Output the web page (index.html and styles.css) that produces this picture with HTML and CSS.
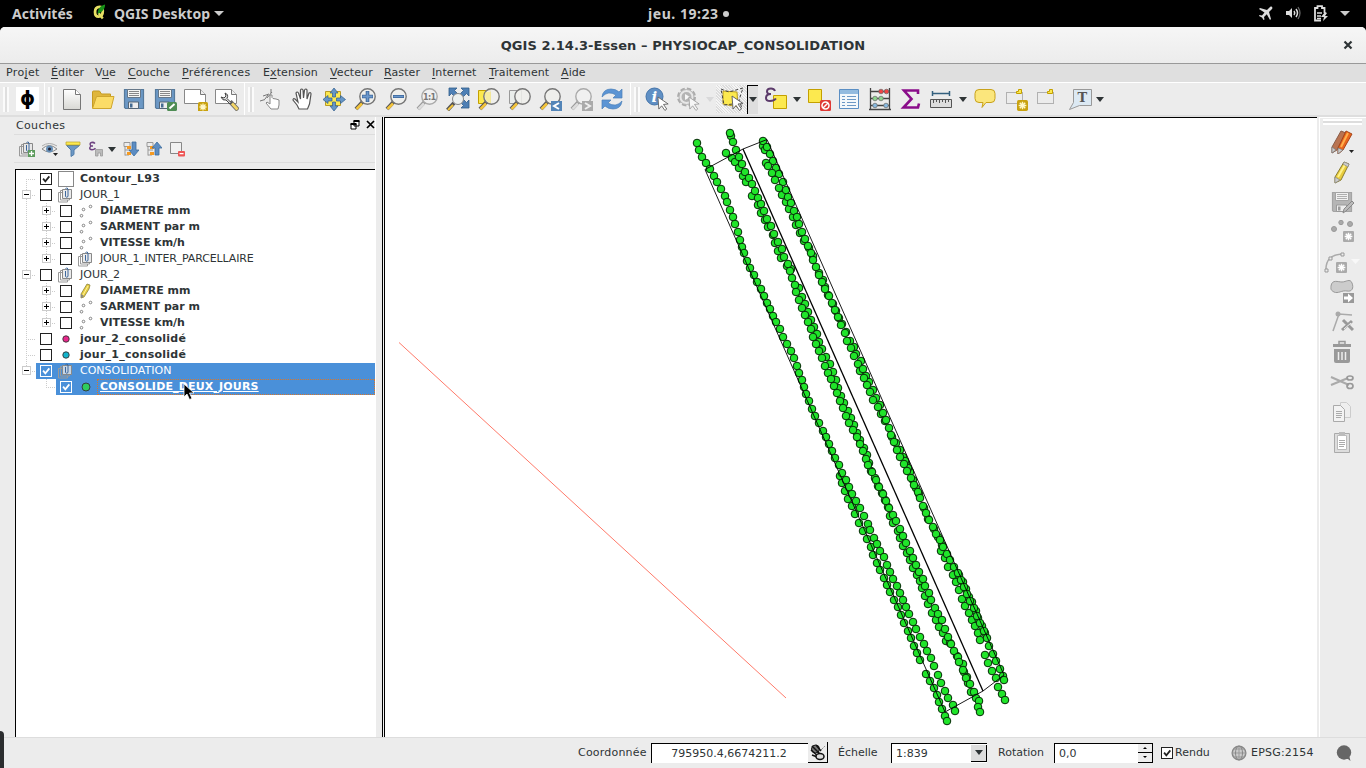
FILE: index.html
```html
<!DOCTYPE html>
<html lang="fr">
<head>
<meta charset="utf-8">
<title>QGIS 2.14.3-Essen - PHYSIOCAP_CONSOLIDATION</title>
<link rel="stylesheet" href="styles.css">
</head>
<body>
<svg class="defs" width="0" height="0">
  <defs>
    <linearGradient id="gy" x1="0" y1="0" x2="0" y2="1"><stop offset="0" stop-color="#fff"/><stop offset="1" stop-color="#d8d8d4"/></linearGradient>
    <symbol id="lens" viewBox="0 0 24 24"><path d="M10 14.500L3 22" stroke="#555" stroke-width="4"/><path d="M9 16.500L3.500 22" stroke="#f5c63c" stroke-width="2.500"/><circle cx="14.500" cy="9.500" r="7.700" fill="#f0f0ec" fill-opacity=".85" stroke="#777" stroke-width="1.400"/></symbol>
    <symbol id="lensg" viewBox="0 0 24 24"><path d="M10 14.500L3 22" stroke="#999" stroke-width="4"/><path d="M9 16.500L3.500 22" stroke="#ddd" stroke-width="2.500"/><circle cx="14.500" cy="9.500" r="7.700" fill="#f0f0f0" stroke="#aaa" stroke-width="1.400"/></symbol>
    <symbol id="ptr" viewBox="0 0 14 16"><path d="M1 1l11 7.500-5 .5 3.500 5-2 1.500-3.500-5-3 3.500z" fill="#fff" stroke="#666" stroke-width="1"/></symbol>
    <symbol id="floppy" viewBox="0 0 24 24"><path d="M2.500 2.500h19v19h-18l-1-1z" fill="#6c98c5" stroke="#567a9c" stroke-width="1.200"/><path d="M5.500 2.500h13v8h-13z" fill="#f5f5f2" stroke="#678"/><path d="M7 4.500h10M7 6.500h10M7 8.500h10" stroke="#888"/><path d="M6.500 15h10v6.500h-10z" fill="#eee" stroke="#567"/><path d="M8 16.500h2.500v4H8z" fill="#456b92"/></symbol>
    <symbol id="group" viewBox="0 0 16 16"><path d="M4 5.500H.5v9.500h9v-2" fill="none" stroke="#999"/><path d="M5 3.500H2.500v9.500h9v-1.500" fill="none" stroke="#999"/><path d="M4.500 2.500h9v9h-9z" fill="#e6e6e6" fill-opacity=".8" stroke="#888"/><path d="M7.500 4V9.500q1.200 1.500 2.500 0V2Q8.700-.5 7.500 2" fill="none" stroke="#3c679d"/></symbol>
    <symbol id="points" viewBox="0 0 16 16"><g fill="#fff" stroke="#777" stroke-width=".9"><circle cx="3.500" cy="12.700" r="1.300"/><circle cx="5.500" cy="6.500" r="1.300"/><circle cx="12.500" cy="3.500" r="1.300"/></g></symbol>
    <symbol id="star" viewBox="0 0 10 10"><rect width="10" height="10" rx="1.500" fill="#c9a20f"/><path d="M5 1.500v7M1.500 5h7M2.500 2.500l5 5M7.500 2.500l-5 5" stroke="#fff8c8" stroke-width="1.300"/></symbol>
    <symbol id="starg" viewBox="0 0 10 10"><rect width="10" height="10" rx="1" fill="#aaa"/><path d="M5 1.500v7M1.500 5h7M2.500 2.500l5 5M7.500 2.500l-5 5" stroke="#fff" stroke-width="1.300"/></symbol>
    <symbol id="check" viewBox="0 0 12 12"><path d="M2.500 5.500l2.700 3.300L10 2.800" fill="none" stroke="currentColor" stroke-width="2.100"/></symbol>
  </defs>
</svg>

<div class="desktop">
<header class="topbar">
  <span class="activities">Activités</span>
  <svg class="qlogo" viewBox="0 0 14 16"><path d="M7 2.500C3.500 2.500 2.200 5 2.200 8S3.500 13 6 13 10.500 11 10.500 7 9 2.500 7 2.500z" fill="none" stroke="#e8e064" stroke-width="3"/><path d="M6 9l4.500 6" stroke="#e8e064" stroke-width="2.500"/><path d="M5 10c0-5 3-9 8-10 0 4-2 8-8 10z" fill="#189018"/></svg>
  <span class="appname">QGIS Desktop</span><i class="arrow light"></i>
  <span class="clock">jeu. 19:23 <b class="dot"></b></span>
  <div class="tray">
    <svg width="15" height="15" viewBox="0 0 15 15"><path d="M14 1c-1-1-2 0-3 1L9 4 2 2 1 3l5.500 3.500L4 9.500 1.500 9 1 10l3 1.500L5.500 14l1-.500L6 11l2.800-2.700L12 14l1-1-2-7 2-2c1-1 2-2 1-3z" fill="#ddd"/></svg>
    <svg width="16" height="14" viewBox="0 0 16 14"><path d="M1 5h3l3-3v10L4 9H1z" fill="#ddd"/><path d="M9 5q1.500 2 0 4M11 3q3 4 0 8" fill="none" stroke="#ddd" stroke-width="1.500"/><path d="M13 1q4 6 0 12" fill="none" stroke="#666" stroke-width="1.300"/></svg>
    <svg width="16" height="17" viewBox="0 0 16 17"><path d="M11.500 8V3H9V1.200H4.500V3H2v12.500h6" fill="none" stroke="#ddd" stroke-width="1.800"/><path d="M4 8h5M4 11h4M4 13.500h4" stroke="#ddd" stroke-width="1.300"/><path d="M12 7l-4 5h3l-1 4 5-5h-3l2-3z" fill="#ddd"/></svg>
    <i class="arrow light"></i>
  </div>
</header>

<div class="window">
<div class="titlebar"><span class="wtitle">QGIS 2.14.3-Essen – PHYSIOCAP_CONSOLIDATION</span><svg class="close" width="10" height="10" viewBox="0 0 10 10"><path d="M1.500 1.500l7 7M8.500 1.500l-7 7" stroke="#2e3436" stroke-width="2.200"/></svg></div>
<nav class="menubar">
  <span class="m1">Pro<u>j</u>et</span><span class="m2"><u>É</u>diter</span><span class="m3">V<u>u</u>e</span><span class="m4"><u>C</u>ouche</span><span class="m5"><u>P</u>références</span><span class="m6">E<u>x</u>tension</span><span class="m7"><u>V</u>ecteur</span><span class="m8"><u>R</u>aster</span><span class="m9"><u>I</u>nternet</span><span class="m10"><u>T</u>raitement</span><span class="m11"><u>A</u>ide</span>
</nav>

<div class="toolbar">
  <div class="grp g0"><i class="handle"></i><span class="phi">ϕ</span></div>
  <div class="grp g1"><i class="handle"></i>
    <span class="tool"><svg viewBox="0 0 24 24"><path d="M3.500 2.500h12l5 5v15h-17z" fill="url(#gy)" stroke="#777"/><path d="M15.500 2.500v5h5" fill="#fff" stroke="#777"/></svg></span>
    <span class="tool"><svg viewBox="0 0 24 24"><path d="M1.500 21V5q0-1 1-1h6l2 3h9v4" fill="#dfb63c" stroke="#c59b22"/><path d="M1.500 21.500l4-12h17.500l-3 12z" fill="#fbdc67" stroke="#cfa62e"/></svg></span>
    <span class="tool"><svg viewBox="0 0 24 24"><use href="#floppy"/></svg></span>
    <span class="tool"><svg viewBox="0 0 24 24"><use href="#floppy"/><rect x="14" y="15" width="10" height="9" rx="1.500" fill="#4f8d55"/><path d="M16.500 21.500l5-4.500" stroke="#fff" stroke-width="2"/></svg></span>
    <span class="tool"><svg viewBox="0 0 24 24"><path d="M.5 2.500h16l5 5v9H.5z" fill="#fff" stroke="#888"/><path d="M16.500 2.500v5h5" fill="#eee" stroke="#777"/><use href="#star" x="14" y="15" width="10" height="10"/></svg></span>
    <span class="tool"><svg viewBox="0 0 24 24"><path d="M.5 2.500h16l5 5v9H.5z" fill="#fff" stroke="#888"/><path d="M16.500 2.500v5h5" fill="#eee" stroke="#777"/><path d="M15 14.500l8 8.500" stroke="#666" stroke-width="4.500"/><path d="M17 16.500l5.500 6" stroke="#f3d566" stroke-width="2.800"/><path d="M16 15.500l-4-4q2-4-2-5.500l1 3-2 2-3-1q1.500 4 5 3l4 4z" fill="#ddd" stroke="#444"/></svg></span>
  </div>
  <div class="grp g2"><i class="handle"></i>
    <span class="tool"><svg viewBox="0 0 24 24"><path d="M10 8v9l-3-2-1 1 5 6h7l1-4v-5l-3-1-3-.5-1-1V8z" fill="#fff" stroke="#888"/><path d="M0 14l5-1.500M3 9l6-2M7 11l5-6M11 6V2M5 12l3-4" stroke="#777" fill="none"/></svg></span>
    <span class="tool"><svg viewBox="0 0 24 24"><path d="M8 22l-2-4-4-5q0-2 2-1l3 3-2-9q1-2 2.500 0l2 6V3q1-2 2.500 0l.5 8 1-8q1.500-2 2.500 0v9l2-6q2-1 2 1l-1.500 10-2 5z" fill="#fff" stroke="#555" stroke-width="1.200"/></svg></span>
    <span class="tool"><svg viewBox="0 0 24 24"><path d="M3.500 4.500h15v14h-15z" fill="#fce94f" stroke="#b89b28"/><path d="M12 1l4 5h-2.500v4h-3V6H8zM12 24l4-5h-2.500v-4h-3v4H8zM1 12.500l5-4V11h4v3H6v2.500zM23.500 12.500l-5-4V11h-4v3h4v2.500z" fill="#6596c7" stroke="#315d8c" stroke-width=".7"/></svg></span>
    <span class="tool"><svg viewBox="0 0 24 24"><use href="#lens"/><path d="M9 9.500h11M14.500 4v11" stroke="#3a6599" stroke-width="3.600"/><path d="M9.500 9.500h10M14.500 4.500v10" stroke="#6b98cc" stroke-width="1.800"/></svg></span>
    <span class="tool"><svg viewBox="0 0 24 24"><use href="#lens"/><path d="M9 9.500h11" stroke="#3a6599" stroke-width="3"/><path d="M9.500 9.500h10" stroke="#6b98cc" stroke-width="1.500"/></svg></span>
    <span class="tool"><svg viewBox="0 0 24 24"><use href="#lensg"/><text x="8" y="13" class="ratio">1:1</text></svg></span>
    <span class="tool"><svg viewBox="0 0 24 24"><g fill="#4f80b5" stroke="#315d8c" stroke-width=".8"><path d="M3 1h8L8.500 3.500l3 3-3 3-3-3L3 9z"/><path d="M23 1h-8l2.500 2.500-3 3 3 3 3-3L23 9zM23 21h-8l2.500-2.500-3-3 3-3 3 3L23 13z"/></g><path d="M8 16L1.500 23" stroke="#555" stroke-width="4"/><path d="M7 18L2 23" stroke="#f5c63c" stroke-width="2"/><circle cx="12" cy="12" r="5.500" fill="#edf0ef" stroke="#888"/></svg></span>
    <span class="tool"><svg viewBox="0 0 24 24"><path d="M1.500 3.500h12v13h-12z" fill="#fce94f" stroke="#c4a000"/><use href="#lens"/><path d="M8 5h6v11q-7-1-6-11z" fill="#fce94f" opacity=".4"/></svg></span>
    <span class="tool"><svg viewBox="0 0 24 24"><path d="M1.500 3.500h12v13h-12z" fill="#e9edea" stroke="#999"/><use href="#lens"/></svg></span>
    <span class="tool"><svg viewBox="0 0 24 24"><use href="#lens"/><path d="M13 14h11v10H13z" fill="#5385b8"/><path d="M21 16l-5 3 5 3" fill="none" stroke="#fff" stroke-width="2"/></svg></span>
    <span class="tool"><svg viewBox="0 0 24 24"><use href="#lensg"/><path d="M13 14h11v10H13z" fill="#aaa"/><path d="M16 16l5 3-5 3" fill="none" stroke="#eee" stroke-width="2"/></svg></span>
    <span class="tool"><svg viewBox="0 0 24 24"><path d="M2 10q1-8 9-8 5 0 8 3l3-3v9h-9l3-3q-8-5-14 2zM22 14q-1 8-9 8-5 0-8-3l-3 3v-9h9l-3 3q8 5 14-2z" fill="#5b94d4" stroke="#4a7fb8" stroke-width=".7"/></svg></span>
  </div>
  <div class="grp g3"><i class="handle"></i>
    <span class="tool"><svg viewBox="0 0 24 24"><circle cx="9.500" cy="9.500" r="8.500" fill="#5f8fc4" stroke="#4474aa"/><text x="6.500" y="15" class="info">i</text><use href="#ptr" x="12" y="9" width="13" height="15"/></svg></span>
    <span class="tool faded"><svg viewBox="0 0 24 24"><circle cx="10.500" cy="10" r="8" fill="#ddd" stroke="#777" stroke-width="3" stroke-dasharray="4.300 2"/><circle cx="10.500" cy="10" r="7.500" fill="#e4e4e4" stroke="#888"/><circle cx="10.500" cy="10" r="5" fill="#888"/><path d="M9 7l5 3-5 3z" fill="#fff"/><use href="#ptr" x="12" y="9" width="13" height="15"/></svg></span>
    <span class="dd pale"><i class="arrow"></i></span>
    <span class="tool pressed"><svg viewBox="0 0 24 24"><path d="M3 4l14 1 1 15-15-3z" fill="#fce94f" stroke="#b89b1e"/><path d="M1 2l8 3L23 1l-4 12 3 8-9-4-9 1z" fill="none" stroke="#444" stroke-dasharray="3 2"/><use href="#ptr" x="11" y="8" width="14" height="16"/></svg></span>
    <span class="dd sunken"><i class="arrow"></i></span>
    <span class="tool eps"><svg viewBox="0 0 24 24"><path d="M9.500 8.500h13v13h-13z" fill="#fce94f" stroke="#c4a000"/><path d="M11 4q-1-2.500-4-2.500-4 0-4 3 0 2.500 4 2.500-5 0-5 4 0 3 4 3 4 0 6-2.500" fill="none" stroke="#5c3b6b" stroke-width="2"/></svg></span>
    <span class="dd e2"><i class="arrow"></i></span>
    <span class="tool"><svg viewBox="0 0 24 24"><path d="M1.500 2.500h13v13h-13z" fill="#fce94f" stroke="#c4a000"/><rect x="13" y="13" width="11" height="11" rx="1.500" fill="#df3a36"/><circle cx="18.500" cy="18.500" r="3.500" fill="none" stroke="#fff" stroke-width="1.500"/><path d="M16 21l5-5" stroke="#fff" stroke-width="1.500"/></svg></span>
    <span class="tool"><svg viewBox="0 0 24 24"><path d="M2.500 2.500h19v19h-19z" fill="#f4f8fb" stroke="#5b8fc4"/><path d="M3 3h18v4H3z" fill="#93bbdf"/><path d="M5 9.500h3M10 9.500h9M5 12.500h3M10 12.500h9M5 15.500h3M10 15.500h9M5 18.500h3M10 18.500h9" stroke="#6c98c5"/></svg></span>
    <span class="tool"><svg viewBox="0 0 24 24"><path d="M2.500 1v21M21.500 1v21M2 4.500h20M2 11.500h20M2 18.500h20M1 22.500h22" stroke="#444" stroke-width="1.300"/><g stroke="#666" stroke-width=".7"><g fill="#ef4545"><circle cx="13" cy="4.500" r="2.300"/><circle cx="18.500" cy="4.500" r="2.300"/></g><g fill="#8ed48e"><circle cx="7" cy="11.500" r="2.300"/><circle cx="13" cy="11.500" r="2.300"/></g><g fill="#88b9df"><circle cx="7" cy="18.500" r="2.300"/><circle cx="18" cy="18.500" r="2.300"/></g></g></svg></span>
    <span class="tool"><svg viewBox="0 0 24 24"><path d="M19 7V3.500H5l7.500 8.500L4.500 20.500H19l1-4" fill="none" stroke="#8a0d8a" stroke-width="2.600"/></svg></span>
    <span class="tool"><svg viewBox="0 0 24 24"><path d="M2 6.500h18M2.500 4v5M19.500 4v5" stroke="#34607e" stroke-width="1.500"/><path d="M.5 12.500h21v8H.5z" fill="#ddd" stroke="#555"/><path d="M3.500 12v4M6.500 12v3M9.500 12v4M12.500 12v3M15.500 12v4M18.500 12v3" stroke="#555"/></svg></span>
    <span class="dd d3"><i class="arrow"></i></span>
    <span class="tool"><svg viewBox="0 0 24 24"><path d="M6 2.500h12q4 0 4 4v5q0 4-4 4h-5L9 20.500l1-5H6q-4 0-4-4v-5q0-4 4-4z" fill="#fbe67c" stroke="#c8a21c"/></svg></span>
    <span class="tool"><svg viewBox="0 0 24 24"><path d="M2.500 5.500h16v11h-16z" fill="none" stroke="#777" stroke-dasharray="1 1"/><path d="M12.500 6.500v-2h2v-2h3v4z" fill="#fce94f" stroke="#c4a000"/><use href="#star" x="13" y="13" width="11" height="11"/></svg></span>
    <span class="tool"><svg viewBox="0 0 24 24"><path d="M2.500 5.500h16v11h-16z" fill="none" stroke="#777" stroke-dasharray="1 1"/><path d="M12.500 6.500v-2h2v-2h3v4z" fill="#fce94f" stroke="#c4a000"/></svg></span>
    <span class="tool txt"><svg viewBox="0 0 24 24"><path d="M5.500 2.500h18v16h-12l-10 4 4-7z" fill="#dce9f3" stroke="#999"/><text x="9.500" y="15" class="tt">T</text></svg></span>
    <span class="dd"><i class="arrow"></i></span>
  </div>
</div>

<div class="main">
  <aside class="dock">
    <div class="docktitle"><span>Couches</span>
      <svg width="26" height="12" viewBox="0 0 26 12"><path d="M5 2h5v5H5zM2 5h5v5H2z" fill="#fff" stroke="#000" stroke-width="1"/><path d="M4.500 2h6M1.500 5h6" stroke="#000" stroke-width="2"/><path d="M18 2l7 7M25 2l-7 7" stroke="#000" stroke-width="1.700"/></svg></div>
    <div class="docktools">
      <svg viewBox="0 0 16 16"><use href="#group"/><path d="M9 9h7v7H9z" fill="#5c9b5c"/><path d="M10 12.500h5M12.500 10v5" stroke="#fff" stroke-width="1.300"/></svg>
      <svg viewBox="0 0 16 16"><path d="M0 8q7-7 15 0-8 6-15 0z" fill="#eee" stroke="#888"/><circle cx="7.500" cy="8" r="3.500" fill="#6790b8"/><circle cx="7.500" cy="8" r="1.500" fill="#223"/><path d="M0 5q7-5 15 0" fill="none" stroke="#aaa"/><path d="M11 12h5l-2.500 3z" fill="#222"/></svg>
      <svg viewBox="0 0 16 16"><path d="M1.500 4.500L6 9v6.500l3-2V9l5.500-4.500z" fill="#6c98c5" stroke="#507da9"/><path d="M1 1h14v3H1z" fill="#fce94f" stroke="#b9a52d" stroke-width=".7"/></svg>
      <svg class="w1" viewBox="0 0 16 16"><path d="M7 2.500Q5.500 1 3.500 1.500 1 2.500 3 5h2-2Q0 8 4 8.800q2 0 3.500-1.500" fill="none" stroke="#6d4280" stroke-width="1.500"/><path d="M7.500 8.500h7V15h-2v-3h-2.500v3h-2.500z" fill="#bbb" stroke="#999" stroke-width=".8"/></svg>
      <i class="arrow"></i>
      <svg viewBox="0 0 16 16" class="w2"><path d="M1 1.500h6v4H1zM2 5.500v9M2 9h5M2 14h4" stroke="#999" fill="none"/><path d="M4 5h4v3H4zM4 11h4v3H4z" fill="#f59a22"/><path d="M9 1h4v8h3l-5 6-5-6h3z" fill="#5c8dc3" stroke="#3f6d9d" stroke-width=".8"/></svg>
      <svg viewBox="0 0 16 16"><path d="M1 1.500h6v4H1zM2 5.500v9M2 9h5M2 14h4" stroke="#999" fill="none"/><path d="M4 5h4v3H4zM4 11h4v3H4z" fill="#f59a22"/><path d="M9 14h4V7h3l-5-6-5 6h3z" fill="#5c8dc3" stroke="#3f6d9d" stroke-width=".8"/></svg>
      <svg viewBox="0 0 16 16"><path d="M1.500 1.500h11v11h-11z" fill="#f1f1f1" stroke="#888"/><rect x="9" y="10" width="7" height="5.500" rx="1" fill="#e55"/><path d="M10.500 12.700h4" stroke="#fff" stroke-width="1.300"/></svg>
    </div>
    <div class="tree" id="tree"></div>
  </aside>
  <section class="canvas"><svg id="map" width="932" height="619" viewBox="385 118 932 619"></svg></section>
  <aside class="side">
    <i class="hhandle"></i>
    <svg viewBox="0 0 24 24"><path d="M2 17L11 1l5 2-9 17-5 3z" fill="#b97452" stroke="#8a5d48"/><path d="M8 18L16 1l6 3-9 16-5 4z" fill="#e9661d" stroke="#a4441a"/><path d="M11 17l7-14" stroke="#ffb04c" stroke-width="2"/><path d="M8 18l5 2-5 4zM2 17l4 3-4 3z" fill="#ccc" stroke="#777" stroke-width=".7"/><path d="M19 20h5l-2.500 3z" fill="#222"/></svg>
    <svg viewBox="0 0 24 24"><path d="M5 17L14 2l5 2-8 16-6 3z" fill="#e8cc3d" stroke="#887b30"/><path d="M8 17l8-14" stroke="#fff28a" stroke-width="2"/><path d="M14 2l5 2-1 3-5-3zM5 17l5 3-5 3z" fill="#ccc" stroke="#888" stroke-width=".7"/></svg>
    <svg viewBox="0 0 24 24"><g class="gray"><use href="#floppy"/></g><path d="M13 23l1-4 8-8 2 2-8 8z" fill="#bbb" stroke="#888"/></svg>
    <svg viewBox="0 0 24 24"><g fill="#aaa" stroke="#999"><circle cx="4" cy="9" r="2.500"/><circle cx="11" cy="2.500" r="2.200"/><circle cx="20" cy="4" r="2.500"/></g><use href="#starg" x="13" y="11" width="11" height="11"/></svg>
    <svg class="curve" viewBox="0 0 36 24"><path d="M2 21Q1 4 20 4" fill="none" stroke="#aaa" stroke-width="1.500"/><g fill="#eee" stroke="#999"><path d="M1 19h3v3H1zM5 7h3v3H5zM17 3h3v3h-3z"/></g><use href="#starg" x="12" y="12" width="11" height="11"/><path d="M27 9h9l-4.500 5z" fill="#f8f8f8"/></svg>
    <svg viewBox="0 0 24 24"><path d="M1 6c1-7 7-4 11-4s8-4 10 1 0 9-5 8-9 3-13 1-3-4-3-6z" fill="#ccc" stroke="#999"/><rect x="13" y="13" width="11" height="10" fill="#999"/><path d="M14 16.500h4v-3l5 4.500-5 4.500v-3h-4z" fill="#fff"/></svg>
    <svg viewBox="0 0 24 24"><path d="M3 21L9 4l13 1" fill="none" stroke="#aaa" stroke-width="1.500"/><circle cx="8" cy="4" r="2.500" fill="#aaa"/><path d="M12 20l10-9M13 10l10 10" stroke="#999" stroke-width="3"/><path d="M14 19l7-6" stroke="#eee"/></svg>
    <svg viewBox="0 0 24 24"><path d="M9 1.500h6v3H9z" fill="none" stroke="#999" stroke-width="1.500"/><path d="M4 9h16v12q0 2-2 2H6q-2 0-2-2z" fill="#999"/><path d="M8.500 12v8M12 12v8M15.500 12v8" stroke="#eee" stroke-width="1.500"/><path d="M3 5.500h18" stroke="#999" stroke-width="3"/></svg>
    <svg viewBox="0 0 24 24"><path d="M1 7l18 8M1 15l17-7" stroke="#aaa" stroke-width="2"/><g fill="none" stroke="#999" stroke-width="1.700"><ellipse cx="20" cy="8" rx="3" ry="2"/><ellipse cx="20" cy="16" rx="3" ry="2.500"/></g></svg>
    <svg viewBox="0 0 24 24"><path d="M10.500 2.500h6l4 4v11h-10z" fill="#eee" stroke="#ccc"/><path d="M3.500 5.500h7l4 4v12h-11z" fill="#f3f3f3" stroke="#aaa"/><path d="M6 11.500h6M6 13.500h6M6 15.500h6M6 17.500h5" stroke="#aaa"/></svg>
    <svg viewBox="0 0 24 24"><path d="M4.500 3.500h15v19h-15z" fill="#ddd" stroke="#aaa"/><path d="M7.500 5.500h9v14h-9z" fill="#fff" stroke="#bbb"/><path d="M9 2h6v4H9z" fill="#bbb"/><path d="M9 10.500h6M9 12.500h6M9 14.500h6M9 16.500h5" stroke="#aaa"/></svg>
  </aside>
</div>

<footer class="status">
  <span class="s1">Coordonnée</span><span class="field coord">795950.4,6674211.2</span>
  <span class="btn"><svg width="16" height="17" viewBox="0 0 16 17"><circle cx="5.500" cy="5" r="4" fill="#777" stroke="#111"/><path d="M2 2l8 8M1 6l8 7M6 1l5 6M2 11l8 3" stroke="#111" stroke-width="1.500"/><ellipse cx="10" cy="12.500" rx="4" ry="3" fill="#ddd" stroke="#111" stroke-width="1.500"/><path d="M11 6l4-4" stroke="#555" stroke-dasharray="1 1"/></svg></span>
  <span class="s2">Échelle</span><span class="field scale">1:839<b><i class="arrow"></i></b></span>
  <span class="s3">Rotation</span><span class="field rot">0,0<b class="spin"><em><i class="tiny up"></i></em><em><i class="tiny"></i></em></b></span>
  <span class="cb sc"><svg viewBox="0 0 12 12"><use href="#check"/></svg></span><span class="s4">Rendu</span>
  <svg class="globe" width="16" height="16" viewBox="0 0 16 16"><circle cx="8" cy="8" r="6.800" fill="#ccc" stroke="#888" stroke-width="1.500"/><path d="M8 1v14M1 8h14M2.500 4h11M2.500 12h11" stroke="#999"/><ellipse cx="8" cy="8" rx="3.500" ry="7" fill="none" stroke="#888"/></svg>
  <span class="s5">EPSG:2154</span>
  <svg class="bubble" width="16" height="16" viewBox="0 0 16 16"><circle cx="8" cy="7.500" r="7.200" fill="#666"/><path d="M8 14h4l2.500 2-1-4z" fill="#666"/></svg>
</footer>
</div>
<i class="corner"></i>
<svg class="cursor" width="12" height="18" viewBox="0 0 12 18"><path d="M1 1v13l3-3 2.500 5.500 2.500-1L6.500 10H11z" fill="#000" stroke="#fff" stroke-width=".8"/></svg>
</div>
<script src="app.js"></script>
</body>
</html>
```

FILE: styles.css
```css
*{box-sizing:border-box}
body{margin:0;width:1366px;height:768px;overflow:hidden;background:#000;color:#2e3436;font:11px "DejaVu Sans",sans-serif}
i{font-style:normal}
.defs{position:absolute}
.desktop{position:relative;width:1366px;height:768px;display:flex;flex-direction:column}
.topbar{height:27px;background:#000;color:#ccc;display:flex;align-items:center;font:bold 14px "Noto Sans","Open Sans",sans-serif;padding-bottom:1px}
.activities{width:81px;padding-left:12px}
.qlogo{width:13px;height:16px;margin:0 7px 2px 12px}
.appname{width:96px;margin-left:1px;white-space:nowrap}
.clock{width:90px;margin-left:424px;white-space:nowrap;letter-spacing:.55px}
.dot{display:inline-block;width:6px;height:6px;border-radius:3px;background:#ccc;margin-bottom:2px}
.tray{margin-left:auto;margin-right:16px;display:flex;align-items:center;gap:12px}
.arrow{display:block;width:0;height:0;border:4.500px solid transparent;border-top:5px solid #2e3436;border-bottom:0;flex:none}
.arrow.light{border-top-color:#ccc;margin-left:4px;border-left-width:5px;border-right-width:5px}
.tray .arrow.light{margin-left:-1px}
.window{height:741px;background:#ececec;border-radius:5px 5px 0 0;overflow:hidden;display:flex;flex-direction:column}
.titlebar{height:37px;border-bottom:1px solid #999;background:linear-gradient(#f6f6f6,#ececec);display:flex;align-items:center;justify-content:center;position:relative;font-weight:bold;font-size:13px;flex:none}
.wtitle{white-space:nowrap;letter-spacing:.08px}
.close{position:absolute;left:1343px;top:13px}
.menubar{height:18px;background:#dfdfdf;display:flex;padding-left:6px;line-height:17px;flex:none}
.menubar span{flex:none;white-space:nowrap;letter-spacing:.1px}
u{text-underline-offset:2px}
.m1{width:45px}.m2{width:44px}.m3{width:33px}.m4{width:54px}.m5{width:81px}.m6{width:67px}.m7{width:54px}.m8{width:48px}.m9{width:57px}.m10{width:72px}
.menubar .m1,.menubar .m5{letter-spacing:.35px}
.toolbar{height:35px;border-top:1px solid #fff;border-bottom:2px solid #dedede;display:flex;flex:none}
.grp{display:flex;align-items:center;flex:none;border-right:1px solid #fff}
.g0{width:45px;padding-left:3px}.g1{width:200px;padding-left:3px}.g2{width:386px;padding-left:3px}.g3{width:735px;padding-left:3px;border:0}
.handle{width:6px;height:25px;border-left:2px solid #fff;border-right:2px solid #fff;background:#ddd;margin-right:2px;flex:none;opacity:.8}
.g2 .handle{margin-right:3px}.g3 .handle{margin-right:1px}
.phi{width:23px;height:24px;background:#fff;color:#000;font:bold 19px/23px "DejaVu Sans",sans-serif;text-align:center;margin-left:5px}
.tool{width:31px;height:28px;display:flex;align-items:center;justify-content:center;flex:none}
.g2 .tool{width:30.900px}
.tool svg{width:24px;height:24px}
.faded{opacity:.55}
.dd{width:13px;display:flex;justify-content:center;flex:none}
.pale{opacity:.1}
.pressed{background:#e8e8e8 repeating-linear-gradient(45deg,#ddd 0 1px,#f5f5f5 1px 2px)}
.sunken{width:11px;height:29px;align-items:center;background:#dedede;border:solid;border-width:1px 0 0 1px;border-color:#000}
.sunken .arrow{border-width:5px 4px 0 4px}
.eps{margin-left:2px}
.e2{width:11px;margin-right:2px}
.e2+.tool{width:29px}
.d3{width:12px}
.txt{margin-left:2px}
.txt+.dd{width:10px}
.ratio{font:bold 8px "DejaVu Sans",sans-serif;fill:#777;letter-spacing:-.6px}
.info{font:italic bold 15px "DejaVu Serif",serif;fill:#fff}
.tt{font:bold 13px "DejaVu Serif",serif;fill:#555}
.main{height:620px;display:flex;flex:none}
.dock{width:376px;padding:0 0 0 14px;flex:none;border-right:1px solid #fff}
.docktitle{height:18px;display:flex;justify-content:space-between;align-items:center;padding:0 0 1px 2px;border-bottom:1px solid #ddd}
.docktitle span{letter-spacing:.35px}
.docktools{height:28px;display:flex;align-items:center;border-bottom:1px solid #ddd;padding:1px 0 0 5px;gap:7px;margin-bottom:6px}
.docktools svg{width:16px;height:16px}
.docktools .arrow{margin-left:-3px}
.docktools .w2{margin-left:0}
.tree{height:568px;width:360px;margin-left:1px;background:#fff;border-left:1px solid #000;border-top:1px solid #000;padding-top:.5px}
.row{display:flex;height:16px}
.branch{width:20px;display:flex;align-items:center;justify-content:center;flex:none}
.trunk{background:repeating-linear-gradient(#ccc 0 1px,transparent 1px 2px) 10px 0/1px 100% no-repeat,repeating-linear-gradient(90deg,#ccc 0 1px,transparent 1px 2px) 10px 8px/10px 1px no-repeat}
.pass{background:repeating-linear-gradient(#ccc 0 1px,transparent 1px 2px) 10px 0/1px 100% no-repeat}
.none{background:none}
.last{background-size:1px 8px,10px 1px}
.first{background-position:10px 8px,10px 8px;background-size:1px 8px,10px 1px}
.exp{width:9px;height:9px;background:#fff;border:1px solid #ccc;display:flex;align-items:center;justify-content:center}
.exp svg{width:7px;height:7px;flex:none}
.cell{flex:1;display:flex;align-items:center;padding-left:4px}
.cb{width:12px;height:12px;border:1px solid #222;display:block;flex:none;color:#222;background:#fff}
.cb svg{display:block;width:10px;height:10px}
.ico{width:16px;height:16px;margin:0 6px;flex:none;display:flex;align-items:center;justify-content:center}
.ico svg{width:16px;height:16px}
.lbl{white-space:nowrap;flex:1;line-height:15px;height:16px}
.bold{font-weight:bold}
.wide{letter-spacing:.25px}
.mid{letter-spacing:.16px}
.tight{letter-spacing:-.14px}
.sel{background:#4a90d9;color:#fff}
.sel .cb{background:#4a90d9;border-color:#fff;color:#fff}
.cur .lbl{text-decoration:underline;border:1px dotted #d9762a;margin-left:-3px;padding-left:2px;line-height:13px}
.swatch{width:16px;height:16px;border:1px solid #888;background:#fff}
.canvas{width:933px;margin-left:8px;border-left:1px solid #000;border-top:1px solid #000;background:#fff;flex:none;box-shadow:-1px 0 #f4f4f4,-2px 0 #000}
.canvas svg{display:block}
.side{margin-left:2px;width:47px;border-left:1px solid #fff;border-top:1px solid #fff;padding:0 0 0 10px;display:flex;flex-direction:column;gap:6px}
.side svg{width:24px;height:24px;flex:none}
.side .curve{width:36px;margin-left:-6px}
.hhandle{width:39px;height:6px;border-top:2px solid #fff;border-bottom:2px solid #fff;background:#ddd;margin:1px 0 -1px -7px;flex:none}
.gray{filter:grayscale(1);opacity:.6}
.status{height:31px;display:flex;align-items:center;border-top:1px solid #ddd;padding:0 0 1px 578px;flex:none}
.status>span{flex:none;white-space:nowrap}
.s1{width:73px;letter-spacing:.2px}
.field{height:20px;background:#fff;border:solid #000;border-width:1px 0 0 1px;display:flex;align-items:center;position:relative;padding-left:4px}
.coord{width:157px;justify-content:center;padding:0 2px 0 0}
.btn{width:20px;height:21px;border:solid #000;border-width:0 1px 1px 0;display:flex;align-items:center;justify-content:center}
.s2{width:53px;margin-left:10px}
.scale{width:96px}
.field b{width:16px;height:17px;background:#ddd;border:solid #000;border-width:0 1px 1px 0;margin-left:auto;display:flex;align-items:center;justify-content:center}
.s3{width:56px;margin-left:11px}
.rot{width:99px}
.field .spin{flex-direction:column;border:0;background:#eee;width:15px;height:19px}
.spin em{width:15px;flex:1;border:solid #000;border-width:0 1px 1px 0;display:flex;align-items:center;justify-content:center}
.tiny{border:2px solid transparent;border-top:2px solid #000;border-bottom:0}
.tiny.up{border-top:0;border-bottom:2px solid #000}
.sc{margin-left:8px}
.s4{width:57px;margin-left:1px;padding-left:1px}
.s5{width:85px;margin-left:4px;letter-spacing:.2px}
.corner{position:absolute;left:0;top:731px;width:4px;height:37px;background:#2b2d2f;border-radius:0 4px 0 0}
.cursor{position:absolute;left:183px;top:383px}
```

FILE: app.js
```js
// Layer tree: [level, expander, checked, icon, label, style flags]
const rows = [
  [0, '', 1, 'box', 'Contour_L93', 'b first wide'],
  [0, '-', 0, 'group', 'JOUR_1', ''],
  [1, '+', 0, 'points', 'DIAMETRE mm', 'b'],
  [1, '+', 0, 'points', 'SARMENT par m', 'b'],
  [1, '+', 0, 'points', 'VITESSE km/h', 'b'],
  [1, '+', 0, 'group', 'JOUR_1_INTER_PARCELLAIRE', 'last tight'],
  [0, '-', 0, 'group', 'JOUR_2', ''],
  [1, '+', 0, 'pen', 'DIAMETRE mm', 'b'],
  [1, '+', 0, 'points', 'SARMENT par m', 'b'],
  [1, '+', 0, 'points', 'VITESSE km/h', 'b last'],
  [0, '', 0, '#e8288c', 'jour_2_consolidé', 'b wide'],
  [0, '', 0, '#12b4cc', 'jour_1_consolidé', 'b wide'],
  [0, '-', 1, 'group', 'CONSOLIDATION', 'sel last'],
  [1, '', 1, '#2ecc5e', 'CONSOLIDE_DEUX_JOURS', 'b sel cur last end mid'],
];
function icon(k) {
  if (k === 'box') return '<span class="swatch"></span>';
  if (k[0] === '#') return `<svg viewBox="0 0 16 16"><circle cx="8" cy="8" r="${k === '#2ecc5e' ? 4 : 3.2}" fill="${k}" stroke="#333" stroke-width=".9"/></svg>`;
  if (k === 'pen') return '<svg viewBox="0 0 16 16"><path d="M3 11L9 1l3 1-1 4-5 8-3 1z" fill="#e9cf42" stroke="#8b8340" stroke-width=".8"/><path d="M5 12l5-9" stroke="#fff4a0"/><path d="M3 11l3 2-3 2z" fill="#888"/></svg>';
  return `<svg viewBox="0 0 16 16"><use href="#${k}"/></svg>`;
}
document.getElementById('tree').innerHTML = rows.map(([lv, ex, on, ic, text, f]) => {
  const has = s => f.split(' ').includes(s);
  const cls = (has('last') ? ' last' : '') + (has('first') ? ' first' : '');
  const spacing = ['wide', 'mid', 'tight'].filter(has).map(s => ' ' + s).join('');
  const e = ex ? `<span class="exp"><svg viewBox="0 0 7 7"><path d="M1 3.5h5${ex === '+' ? 'M3.5 1v5' : ''}" stroke="#000"/></svg></span>` : '';
  return `<div class="row">${lv ? `<span class="branch ${has('end') ? 'none' : 'pass'}"></span>` : ''}<span class="branch trunk${cls}">${e}</span>` +
    `<span class="cell${has('sel') ? ' sel' : ''}${has('cur') ? ' cur' : ''}"><span class="cb">${on ? '<svg viewBox="0 0 12 12"><use href="#check"/></svg>' : ''}</span>` +
    `<span class="ico">${icon(ic)}</span><span class="lbl${has('b') ? ' bold' : ''}${spacing}">${text}</span></span></div>`;
}).join('');

// Survey points, one string per vine row pass
const tracks = [
  '697,143 699,150 702,157 706,163 710,169 714,176 717,182 721,189 725,196 727,202 730,210 733,217 735,224 738,232 740,240 742,247 744,253 747,261 750,268 754,275 757,282 761,289 764,296 767,303 770,309 773,316 776,322 780,329 783,337 787,344 791,351 794,358 797,366 799,373 802,380 804,387 806,394 809,401 812,409 815,416 819,423 823,431 826,437 829,444 832,451 835,458 839,465',
  '840,476 842,483 845,491 848,499 852,506 855,514 859,523 863,531 867,539 871,547 873,555 877,563 880,570 884,578 887,585 890,592 894,600 898,607 901,615 904,623 908,631 911,638 914,646 917,653 920,660 926,674 930,681 934,688 937,695 939,702 942,709 945,716 947,721',
  '842,473 846,480 849,487 852,494 856,501 860,508 864,516 868,524 870,530 874,538 877,544 880,551 884,557 887,565 890,572 893,579 897,586 900,593 903,600 906,607 909,614 913,622 916,629 920,637 924,644 927,651 931,658 934,666 938,675 941,683 945,691 948,698 953,705 955,711',
  '731,136 726,153 732,158 735,162 739,168 743,176 746,182 752,196 758,205 761,213 765,220 768,227 773,235 775,243 778,251 781,258 787,266 791,269 799,288 802,297 805,304 808,312 811,320 814,327 817,334 819,342 822,349 826,357 830,364 833,372 836,380 838,388 841,396 844,403 848,411 851,418 854,425 857,433 860,440 864,448 867,455 869,463 871,471 875,478 878,486 882,493 885,500 888,507 890,516 893,523 898,531 900,538 903,546 907,553 910,560 913,568 917,575 920,581 922,588 925,596 928,604 932,613 936,620 939,627 943,633 946,641 950,643 957,656 963,664 964,672 967,677 968,683 971,692',
  '730,133 733,142 736,150 739,157 742,164 745,172 749,178 752,184 755,191 758,198 761,204 764,211 767,219 771,226 774,234 778,242 782,249 784,257 788,264 790,271 792,278 795,285 796,292 799,300 802,308 805,315 808,322 811,329 813,337 816,344 819,351 822,358 825,366 828,373 831,379 834,386 837,393 840,401 843,408 846,416 849,423 853,430 857,437 860,444 863,451 866,459 868,465 872,472 876,480 879,487 883,494 886,501 889,508 893,515 896,521 900,529 903,536 906,543 910,551 913,558 916,565 919,572 923,579 925,586 929,593 931,600 935,608 938,614 942,620 945,629 948,637 951,644 954,651 958,657 959,662 963,670 966,678 970,684 974,692 976,698 979,701 978,707 980,712',
  '763,146 765,150 766,163 776,168 779,174 783,182 782,195 786,202 789,209 793,217 796,225 800,233 804,241 809,248 813,256 819,273 823,280 825,287 828,295 833,304 836,311 839,318 842,324 846,332 850,341 854,347 856,354 861,361 860,371 866,376 869,382 873,390 876,398 880,405 881,414 885,421 892,437 896,443 900,450 903,457 906,464 910,472 905,461 908,468 913,480 916,488 919,494 924,508 928,519 934,529 938,537 942,545 941,551 945,558 948,567 953,575 956,582 959,590 962,599 965,606 969,613 972,620 975,626 978,633 980,640 985,655 988,663 992,671 996,678 959,575 963,582 966,589 969,597 972,602 976,611 978,618 982,626 985,633',
  '763,141 767,147 770,154 773,161 768,166 772,173 775,180 779,188 786,190 788,197 791,203 794,211 797,217 799,224 802,232 805,239 808,246 811,253 813,260 816,267 819,275 822,282 825,289 829,296 832,303 835,310 838,317 841,325 845,333 847,341 851,348 854,356 858,364 863,369 864,378 867,385 870,392 873,400 878,407 883,413 886,420 889,428 891,435 894,442 897,450 900,457 904,464 907,471 911,478 914,485 918,492 920,498 923,506 926,513 929,520 933,527 936,534 940,540 943,547 947,554 950,560 954,567 958,573 961,580 964,587 967,594 970,601 974,608 977,616 980,623 984,631 987,638 989,646 993,654 996,661 1000,669 1003,676 1004,680 998,687 1002,694 1005,700',
];
const dots = tracks.join(' ').split(' ').map(p => {
  const [x, y] = p.split(',');
  return `<circle cx="${x}" cy="${y}" r="3.8"/>`;
}).join('');
document.getElementById('map').innerHTML =
  '<path d="M399 342.5L786 698" stroke="#ff7a6a" stroke-width="1"/>' +
  `<g fill="#20e52a" stroke="#062806" stroke-width="1">${dots}</g>` +
  '<path d="M705 169.500L743 149 767 139.500 1004 675 983 691 945 712z" fill="none" stroke="#000" stroke-width=".9"/>' +
  '<path d="M743 149L983 691" stroke="#000" stroke-width="1.300"/>';
```
